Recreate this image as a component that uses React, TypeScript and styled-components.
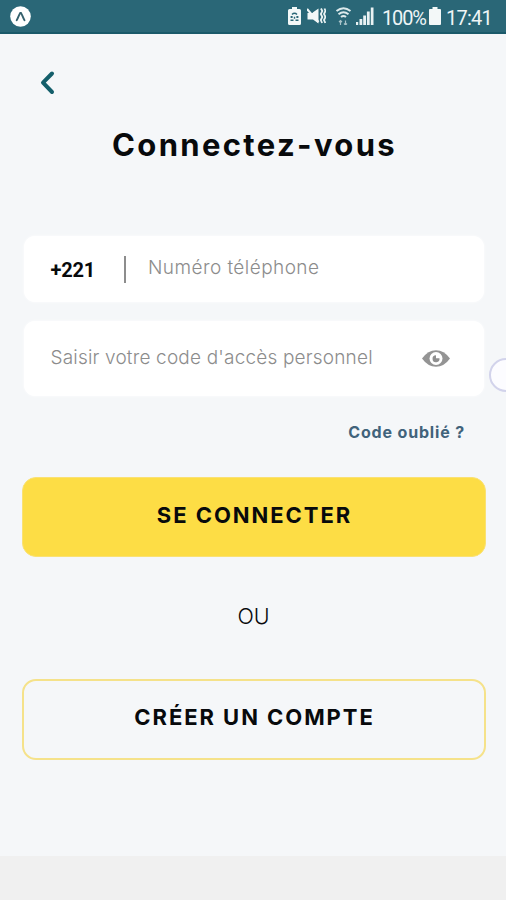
import React from "react";
import styled, { createGlobalStyle } from "styled-components";

const GlobalStyle = createGlobalStyle`
  * { box-sizing: border-box; }
  body { margin: 0; background: #f5f7f9; }
`;

const Screen = styled.div`
  position: relative;
  display: flex;
  flex-direction: column;
  width: 506px;
  height: 900px;
  overflow: hidden;
  background: #f5f7f9;
  font-family: Inter, "Open Sans", sans-serif;
  color: #080a0c;
`;

const StatusBar = styled.header`
  display: flex;
  align-items: center;
  flex: none;
  height: 34px;
  padding: 0 12px 0 10px;
  background: #2a6777;
  border-bottom: 2px solid #1b5a6a;
  color: #eef5f6;
`;

const StatusIcons = styled.div`
  display: flex;
  align-items: center;
  margin-left: auto;
`;

const StatusText = styled.span<{ $width: number; $tracking: number }>`
  width: ${(p) => p.$width}px;
  margin-top: 3px;
  font: 400 20px/24px Roboto, sans-serif;
  letter-spacing: ${(p) => p.$tracking}px;
  white-space: nowrap;
`;

const Icon = styled.svg<{ $gap?: number; $after?: number }>`
  display: block;
  flex: none;
  margin-left: ${(p) => p.$gap ?? 0}px;
  margin-right: ${(p) => p.$after ?? 0}px;
`;

const Main = styled.main`
  display: flex;
  flex-direction: column;
  flex: 1;
  padding: 0 20.5px 0 21.5px;
`;

const BackButton = styled.button`
  align-self: flex-start;
  width: 20px;
  height: 28px;
  margin: 35px 0 0 15px;
  padding: 0;
  border: 0;
  background: none;
`;

const Title = styled.h1`
  margin: 28px 0 0;
  padding-left: 2px;
  font-size: 31px;
  font-weight: 700;
  line-height: 40px;
  letter-spacing: 2.35px;
  text-align: center;
  white-space: nowrap;
`;

const Field = styled.div<{ $height: number; $top: number }>`
  display: flex;
  align-items: center;
  height: ${(p) => p.$height}px;
  margin: ${(p) => p.$top}px 1.5px 0 2px;
  padding: 0 34px 0 27px;
  border-radius: 11px;
  background: #fff;
  box-shadow: 0 0 3px rgba(255, 255, 255, 0.9);
`;

const DialCode = styled.span`
  width: 73.5px;
  padding: 2px 0 0;
  font: 700 20px/24px Roboto, sans-serif;
  letter-spacing: -0.2px;
`;

const Divider = styled.span`
  width: 1.5px;
  height: 27px;
  margin-right: 22.5px;
  background: #8d8d8d;
`;

const Placeholder = styled.span<{ $tracking: number }>`
  flex: 1;
  margin-top: -2px;
  font-size: 19px;
  font-weight: 300;
  line-height: 24px;
  letter-spacing: ${(p) => p.$tracking}px;
  white-space: nowrap;
  color: #8c8c8c;
`;

const ForgotLink = styled.a`
  align-self: flex-end;
  margin: 26px 20.5px 0 0;
  font-size: 16px;
  font-weight: 700;
  line-height: 20px;
  letter-spacing: 0.84px;
  color: #41637b;
`;

const Button = styled.button<{ $outlined?: boolean; $top: number }>`
  flex: none;
  height: ${(p) => (p.$outlined ? 81 : 80)}px;
  margin: ${(p) => p.$top}px 0 0;
  padding: ${(p) => (p.$outlined ? "0 0 6px 2px" : "0 0 4px 2px")};
  border: ${(p) => (p.$outlined ? "2px solid #f5e28a" : "1px solid #fae173")};
  border-radius: 14px;
  background: ${(p) => (p.$outlined ? "transparent" : "#fddd45")};
  font: 700 22px/28px Inter, sans-serif;
  letter-spacing: 1.95px;
  color: #080a0c;
`;

const Separator = styled.div`
  margin-top: 45px;
  font-size: 21.5px;
  font-weight: 300;
  line-height: 28px;
  text-align: center;
`;

const NavArea = styled.footer`
  flex: none;
  height: 44px;
  background: #f0f0f0;
`;

const TouchBubble = styled.div`
  position: absolute;
  top: 358px;
  left: 489px;
  width: 34px;
  height: 34px;
  border: 2px solid #d2d3eb;
  border-radius: 50%;
  background: #fcfcff;
`;

export default function App() {
  return (
    <Screen>
      <GlobalStyle />
      <StatusBar>
        <Icon width="21" height="21" viewBox="0 0 21 21">
          <circle cx="10.5" cy="10.5" r="10.3" fill="#fff" />
          <path d="M6.7 14.2c1.5-2.2 2.2-5.5 3.5-7.2h.8c1.3 1.7 2 5 3.5 7.2" fill="none" stroke="#35616d" strokeWidth="1.9" strokeLinecap="round" />
        </Icon>
        <StatusIcons>
          <Icon width="13" height="18" viewBox="0 0 13 18">
            <path d="M4 0h5v2h2.5Q13 2 13 3.500v13q0 1.500-1.500 1.500h-10Q0 18 0 16.500v-13Q0 2 1.500 2H4z" fill="#f3f8f8" />
            <path d="M4 7.500q2.500-2.500 5 0M2.500 13.300h3M7.500 13.300h3" fill="none" stroke="#2a6777" strokeWidth="1.500" />
            <path d="M2.600 10h2M8.400 10h2M5.800 10.800h1.400" stroke="#2a6777" strokeWidth="1.900" />
          </Icon>
          <Icon $gap={6} width="19" height="18" viewBox="0 0 19 18">
            <path d="M.5 6H5l6.500-4.500v15L6 12.500H.5z" fill="#f3f8f8" />
            <path d="M0 2l11.500 13" stroke="#f3f8f8" strokeWidth="2.200" />
            <path d="M2.600 2.600l3 3.400" stroke="#2a6777" strokeWidth=".8" />
            <path d="M14 1.500l1.300 2.600L13.800 7l1.500 3-1.500 3 1.300 3M17.500 1.500L18.500 4 17 7l1.500 3-1.500 3 1.300 3" fill="none" stroke="#eaf2f3" strokeWidth="1.800" />
          </Icon>
          <Icon $gap={9} width="17" height="18" viewBox="0 0 17 18">
            <path d="M1.500 4q7-5.500 14 0M3.500 7.200q5-4 10 0M6 10q2.500-2 5 0" fill="none" stroke="#dce9eb" strokeWidth="2" />
            <path d="M5.500 18v-4.500M4 15l1.500-1.500L7 15M10.500 13.500V18M9 16.500l1.500 1.500 1.500-1.500" fill="none" stroke="#a9c4ca" strokeWidth="1.200" />
          </Icon>
          <Icon $gap={4} $after={8} width="18" height="18" viewBox="0 0 18 18">
            <path d="M0 15h2.200v3H0zM3.500 12h2.800v6H3.500zM7.200 8.500H10V18H7.200zM10.900 4.500h2.800V18h-2.800zM14.800 .5h2.700V18h-2.700z" fill="#e9f2f3" />
          </Icon>
          <StatusText $width={47} $tracking={-1.15}>100%</StatusText>
          <Icon $after={5} width="12" height="18" viewBox="0 0 12 18">
            <path d="M3.500 0h5v2H11q1 0 1 1v14q0 1-1 1H1q-1 0-1-1V3q0-1 1-1h2.500z" fill="#f3f8f8" />
          </Icon>
          <StatusText $width={48} $tracking={-0.75}>17:41</StatusText>
        </StatusIcons>
      </StatusBar>
      <Main>
        <BackButton aria-label="Retour">
          <Icon width="20" height="28" viewBox="0 0 20 28">
            <path d="M15 4.500L6 13.700l9 9.300" fill="none" stroke="#145f6b" strokeWidth="4" strokeLinecap="round" strokeLinejoin="round" />
          </Icon>
        </BackButton>
        <Title>Connectez-vous</Title>
        <Field $height={66} $top={71}>
          <DialCode>+221</DialCode>
          <Divider />
          <Placeholder $tracking={0.44}>Numéro téléphone</Placeholder>
        </Field>
        <Field $height={75} $top={19}>
          <Placeholder $tracking={0.18}>Saisir votre code d'accès personnel</Placeholder>
          <Icon width="28" height="18" viewBox="0 0 28 18">
            <path d="M0 8.500Q6 .2 14 .2t14 8.300q-6 8.300-14 8.300T0 8.500z" fill="#949494" />
            <circle cx="14" cy="8.500" r="6.500" fill="#fff" />
            <path d="M14 5.200v3h3.500A3.500 3.500 0 1 1 14 5.200z" fill="#8f8f8f" />
          </Icon>
        </Field>
        <ForgotLink>Code oublié ?</ForgotLink>
        <Button $top={35}>SE CONNECTER</Button>
        <Separator>OU</Separator>
        <Button $outlined $top={49}>CRÉER UN COMPTE</Button>
      </Main>
      <NavArea />
      <TouchBubble />
    </Screen>
  );
}
